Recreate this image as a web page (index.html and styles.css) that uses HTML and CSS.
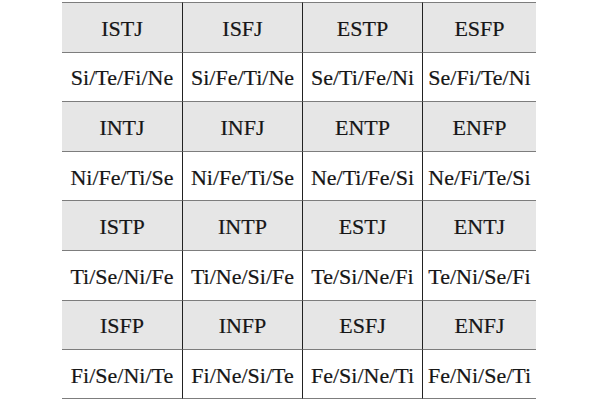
FILE: index.html
```html
<!DOCTYPE html>
<html>
<head>
<meta charset="utf-8">
<link rel="stylesheet" href="styles.css">
</head>
<body>
<div class="table">
  <div class="cell head">ISTJ</div><div class="cell head">ISFJ</div><div class="cell head">ESTP</div><div class="cell head">ESFP</div>
  <div class="cell">Si/Te/Fi/Ne</div><div class="cell">Si/Fe/Ti/Ne</div><div class="cell">Se/Ti/Fe/Ni</div><div class="cell">Se/Fi/Te/Ni</div>
  <div class="cell head">INTJ</div><div class="cell head">INFJ</div><div class="cell head">ENTP</div><div class="cell head">ENFP</div>
  <div class="cell">Ni/Fe/Ti/Se</div><div class="cell">Ni/Fe/Ti/Se</div><div class="cell">Ne/Ti/Fe/Si</div><div class="cell">Ne/Fi/Te/Si</div>
  <div class="cell head">ISTP</div><div class="cell head">INTP</div><div class="cell head">ESTJ</div><div class="cell head">ENTJ</div>
  <div class="cell">Ti/Se/Ni/Fe</div><div class="cell">Ti/Ne/Si/Fe</div><div class="cell">Te/Si/Ne/Fi</div><div class="cell">Te/Ni/Se/Fi</div>
  <div class="cell head">ISFP</div><div class="cell head">INFP</div><div class="cell head">ESFJ</div><div class="cell head">ENFJ</div>
  <div class="cell last">Fi/Se/Ni/Te</div><div class="cell last">Fi/Ne/Si/Te</div><div class="cell last">Fe/Si/Ne/Ti</div><div class="cell last">Fe/Ni/Se/Ti</div>
</div>
</body>
</html>
```
FILE: styles.css
```css
html, body {
  margin: 0;
  padding: 0;
  background: #ffffff;
  width: 600px;
  height: 400px;
  overflow: hidden;
}
.table {
  margin: 2px 0 0 62px;
  width: 474px;
  display: grid;
  grid-template-columns: 120px 120px 120px 114px;
  grid-template-rows: repeat(7, 49.6px) 49.8px;
}
.cell {
  box-sizing: border-box;
  display: flex;
  align-items: center;
  justify-content: center;
  border-top: 1px solid #7d7d7d;
  font-family: "Liberation Serif", serif;
  font-size: 22px;
  color: #161616;
  -webkit-text-stroke: 0.2px #161616;
  padding-top: 3px;
  white-space: nowrap;
}
.cell:not(:nth-child(4n+1)) {
  border-left: 1px solid #222222;
}
.head {
  background: #e6e6e6;
}
.last {
  border-bottom: 1px solid #7d7d7d;
}
```
